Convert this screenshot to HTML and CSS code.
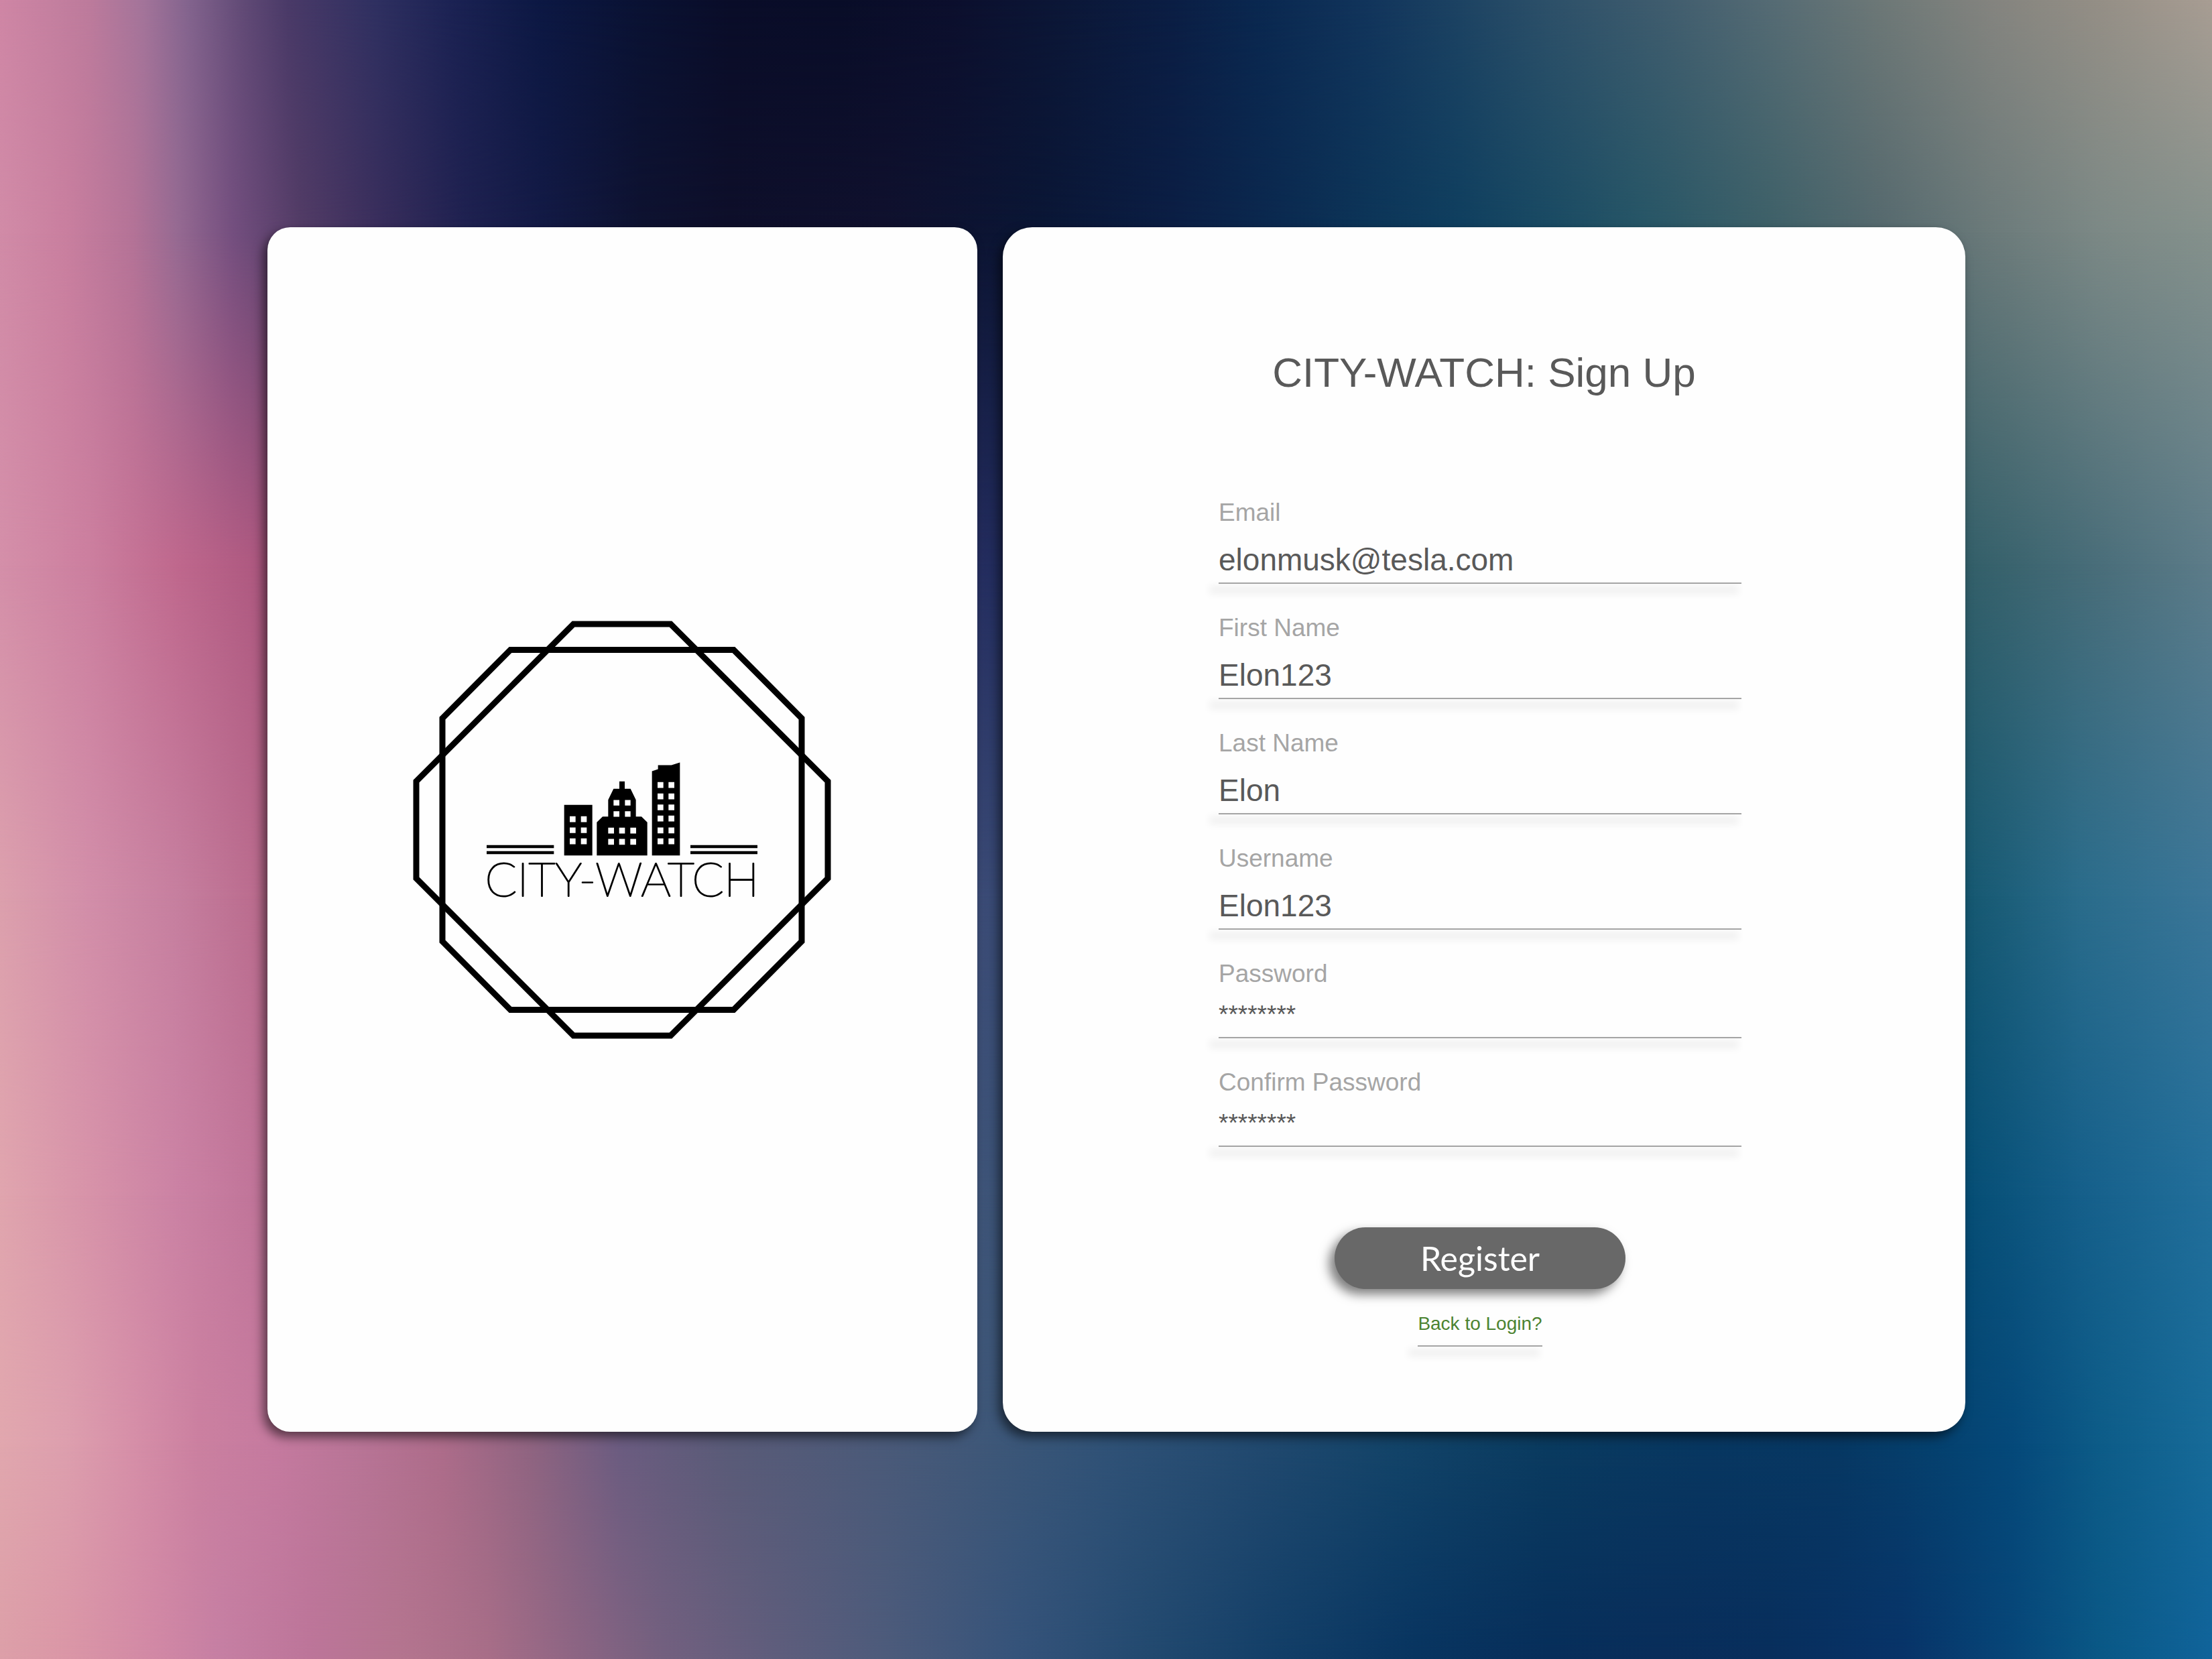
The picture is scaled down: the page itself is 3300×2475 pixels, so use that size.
FILE: index.html
```html
<!DOCTYPE html>
<html lang="en">
<head>
<meta charset="utf-8">
<title>CITY-WATCH: Sign Up</title>
<meta name="viewport" content="width=device-width, initial-scale=1">
<link rel="stylesheet" href="styles.css">
</head>
<body>
<div class="page">
  <div class="backdrop" aria-hidden="true">
    <div class="band band-1"></div>
    <div class="band band-2"></div>
    <div class="band band-3"></div>
    <div class="band band-4"></div>
    <div class="band band-5"></div>
    <div class="band band-6"></div>
    <div class="band band-7"></div>
  </div>
  <main class="layout">
    <section class="card brand">
      <svg class="logo" viewBox="-312 -313 626 626" role="img" aria-label="CITY-WATCH">
        <g fill="none" stroke="#000" stroke-width="9">
          <path d="M-72.5-307h145L307-72.500v145L72.500 307h-145L-307 72.500v-145z"/>
          <path d="M-166.500-268.500h333L268-166.500v333L166.500 268.500h-333L-268 166.500v-333z"/>
        </g>
        <g transform="translate(-228 -117.500) scale(.33333)">
          <path d="M78 421h301v13H78zM78 448h301v13H78zM990 421h300v13H990zM990 448h300v13H990z"/>
          <path fill-rule="evenodd" d="M425 241h126v226H425z
            M450 292h26v26h-26zM500 292h26v26h-26zM450 342h26v25h-26zM500 342h26v25h-26zM450 391h26v26h-26zM500 391h26v26h-26z"/>
          <path fill-rule="evenodd" d="M571 319l26-26h25v-75l24-49h26v-33h24v33h26l24 49v75h25l26 26v148H571z
            M646 219h26v25h-26zM697 219h25v25h-25zM646 269h26v25h-26zM697 269h25v25h-25z
            M622 343h26v26h-26zM671 343h26v26h-26zM721 343h26v26h-26zM622 393h26v26h-26zM671 393h26v26h-26zM721 393h26v26h-26z"/>
          <path fill-rule="evenodd" d="M818 90l27-9V63h60l38-12v416H818z
            M843 139h26v26h-26zM892 139h26v26h-26zM843 190h26v26h-26zM892 190h26v26h-26zM843 239h26v26h-26zM892 239h26v26h-26z
            M843 289h26v26h-26zM892 289h26v26h-26zM843 342h26v26h-26zM892 342h26v26h-26zM843 391h26v26h-26zM892 391h26v26h-26z"/>
        </g>
        <text class="logo-text" x="0" y="99" text-anchor="middle">CITY-WATCH</text>
      </svg>
    </section>
    <section class="card signup">
      <h1 class="title">CITY-WATCH: Sign Up</h1>
      <form class="form">
        <div class="field">
          <label class="label" for="email">Email</label>
          <div class="control"><input class="input" id="email" type="email" value="elonmusk@tesla.com"></div>
        </div>
        <div class="field">
          <label class="label" for="first">First Name</label>
          <div class="control"><input class="input" id="first" type="text" value="Elon123"></div>
        </div>
        <div class="field">
          <label class="label" for="last">Last Name</label>
          <div class="control"><input class="input" id="last" type="text" value="Elon"></div>
        </div>
        <div class="field">
          <label class="label" for="user">Username</label>
          <div class="control"><input class="input" id="user" type="text" value="Elon123"></div>
        </div>
        <div class="field">
          <label class="label" for="pass">Password</label>
          <div class="control"><input class="input input-secret" id="pass" type="text" value="********"></div>
        </div>
        <div class="field">
          <label class="label" for="confirm">Confirm Password</label>
          <div class="control"><input class="input input-secret" id="confirm" type="text" value="********"></div>
        </div>
        <div class="actions">
          <button class="button" type="submit">Register</button>
          <a class="link" href="#login">Back to Login?</a>
        </div>
      </form>
    </section>
  </main>
</div>
</body>
</html>
```

FILE: styles.css
```css
*, *::before, *::after { box-sizing: border-box; }

body {
  margin: 0;
  font-family: "Liberation Sans", Arial, sans-serif;
  color: #595959;
}

.page {
  display: grid;
  min-height: 100vh;
}

.page > * { grid-area: 1 / 1; }

/* Colour mesh: each band is one horizontal gradient that fades in over the one before it. */
.backdrop { display: grid; }

.band { grid-area: 1 / 1; }

.band-1 {
  background: linear-gradient(90deg, #cf86a5 0%, #bd7b9c 4%, #a3749a 6.5%, #83648e 8.5%, #614a76 11%, #4a3a68 13%, #2f3061 17%, #1b2253 20.5%, #0c1843 24.5%, #0a1233 29%, #0a0d29 33%, #090d28 38%, #0c0f2d 43%, #0c1737 48%, #0b1e44 53%, #0a2850 57%, #12355c 62%, #1d4363 66%, #2d5069 70%, #3f5c6e 75%, #556b74 80%, #6d7877 85%, #84847f 90%, #958f86 95%, #a89d93 100%);
}

.band-2 {
  background: linear-gradient(90deg, #d18ba7 0%, #c97f9f 3%, #b47397 6%, #966a92 8%, #744f7f 10.5%, #533c66 13.5%, #3a2e5c 17%, #1f2150 21%, #131a45 24.5%, #0e1230 29%, #0e0f2a 33%, #10112e 40%, #0a1635 47%, #0b1e44 53%, #0b2a50 58%, #0c3558 62%, #0f3f5f 66%, #194a63 70%, #255566 74%, #3d6068 80%, #55696e 85%, #6b7a7a 90%, #7c8986 95%, #85918c 100%);
  mask-image: linear-gradient(transparent 0%, #000 14%);
}

.band-3 {
  background: linear-gradient(90deg, #d48fa9 0%, #cc7f9f 4%, #bf688d 8%, #ac577f 12%, #232d5f 44.8%, #335f69 89%, #4a6e7a 95%, #5d7c89 100%);
  mask-image: linear-gradient(transparent 14%, #000 34%);
}

.band-4 {
  background: linear-gradient(90deg, #dca0ad 0%, #d28ea9 4%, #c67f9f 8%, #b96a8c 12%, #3a4b76 44.8%, #165871 89%, #2a6c8b 94%, #3b7698 100%);
  mask-image: linear-gradient(transparent 34%, #000 54%);
}

.band-5 {
  background: linear-gradient(90deg, #e0a5ae 0%, #d793a9 4%, #cb82a4 8%, #bf7398 12%, #3d5478 44.8%, #064e75 89%, #155f8a 94%, #226f9b 100%);
  mask-image: linear-gradient(transparent 54%, #000 72%);
}

.band-6 {
  background: linear-gradient(90deg, #e1a7ae 0%, #dd9fae 3%, #d68fa8 6%, #cb80a0 9%, #c57a9f 12.5%, #b97597 16%, #ad6c8a 20%, #8f6481 24%, #6b5c80 28%, #595b78 33%, #4a5a79 40%, #3d5778 45%, #305277 50%, #21496f 57%, #134469 63%, #0a3b60 70%, #083761 77%, #073863 83%, #054270 88%, #05497a 91%, #0d5c88 95%, #176b99 100%);
  mask-image: linear-gradient(transparent 72%, #000 87%);
}

.band-7 {
  background: linear-gradient(90deg, #dc9fa8 0%, #da96a6 3%, #d188a5 7%, #c57fa3 10%, #bc7599 14%, #b4758f 18%, #a86e88 22%, #8d6583 26%, #73607f 30%, #5f5d7c 35%, #4d5b7b 40%, #35537a 46%, #22496f 52%, #123e67 58%, #083460 64%, #072e5a 70%, #092d5a 75%, #082e5c 80%, #083368 86%, #074678 91%, #0a5886 95%, #10639a 100%);
  mask-image: linear-gradient(transparent 87%, #000 100%);
}

.layout {
  z-index: 1;
  display: grid;
  grid-template-columns: 1059fr 1436fr;
  gap: 38px;
  padding: 339px 368px 339px 399px;
}

.card {
  background: #fefefe;
  box-shadow: -6px 8px 16px rgba(0, 0, 0, 0.55);
}

.brand {
  display: flex;
  align-items: center;
  justify-content: center;
  border-radius: 34px;
}

.logo {
  display: block;
  width: 626px;
}

.logo-text {
  font-family: Lato, sans-serif;
  font-size: 70px;
  font-weight: 100;
  stroke: #000;
  stroke-width: 2px;
  stroke-linejoin: round;
}

.signup {
  padding: 181px 322px 127px;
  border-radius: 44px;
}

.title {
  margin: 0 0 152px;
  font-size: 62px;
  font-weight: 400;
  line-height: 72px;
  text-align: center;
  white-space: nowrap;
}

.form {
  display: flex;
  flex-direction: column;
  gap: 45px;
  margin-right: 12px;
}

.field {
  display: flex;
  flex-direction: column;
  gap: 19px;
}

.label {
  color: #a5a5a5;
  font-size: 37px;
  line-height: 42px;
}

.control,
.link {
  display: flex;
  flex-direction: column;
}

.control::after,
.link::after {
  content: "";
  height: 2px;
  background: #a5a5a5;
  box-shadow: -9px 10px 12px 5px rgba(0, 0, 0, 0.06);
}

.input {
  width: 100%;
  height: 64px;
  padding: 0 0 4px;
  border: 0;
  outline: 0;
  background: transparent;
  color: #595959;
  font-family: inherit;
  font-size: 46px;
  line-height: 60px;
}

.input-secret {
  height: 54px;
  padding-bottom: 12px;
  font-size: 37px;
  line-height: 42px;
}

.actions {
  display: flex;
  flex-direction: column;
  align-items: center;
  gap: 36px;
  padding-top: 75px;
}

.button {
  width: 434px;
  height: 92px;
  padding: 0;
  border: 0;
  border-radius: 46px;
  background: #686868;
  box-shadow: -8px 8px 16px rgba(0, 0, 0, 0.5);
  color: #fff;
  font-family: Lato, sans-serif;
  font-size: 50px;
  line-height: 60px;
}

.link {
  gap: 16px;
  color: #4c8331;
  font-size: 28px;
  line-height: 32px;
  text-decoration: none;
}
```
